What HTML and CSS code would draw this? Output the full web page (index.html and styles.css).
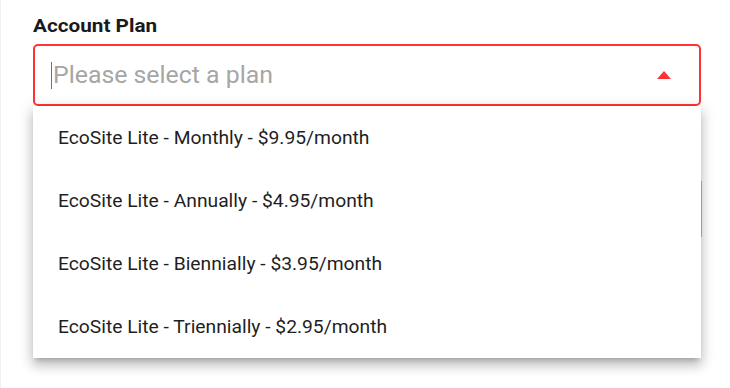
FILE: index.html
```html
<!DOCTYPE html>
<html>
<head>
<meta charset="utf-8">
<link rel="stylesheet" href="styles.css">
</head>
<body>
<div class="page">
  <div class="field">
    <label class="label"><span class="wide">Account Plan</span></label>
    <div class="select">
      <span class="caret"></span>
      <span class="placeholder"><span class="wide">Please select a plan</span></span>
      <span class="arrow"></span>
    </div>
    <ul class="menu">
      <li class="item"><span class="wide">EcoSite Lite - Monthly - $9.95/month</span></li>
      <li class="item"><span class="wide">EcoSite Lite - Annually - $4.95/month</span></li>
      <li class="item"><span class="wide">EcoSite Lite - Biennially - $3.95/month</span></li>
      <li class="item"><span class="wide">EcoSite Lite - Triennially - $2.95/month</span></li>
      <span class="scrollbar"></span>
    </ul>
  </div>
</div>
</body>
</html>
```
FILE: styles.css
```css
html, body {
  margin: 0;
  padding: 0;
  background: #fff;
}
body {
  font-family: Roboto, "Liberation Sans", sans-serif;
  width: 730px;
  height: 388px;
  overflow: hidden;
  border-left: 1px solid #f0f0f0;
  box-sizing: border-box;
}
.page {
  padding: 15px 29px 0 32px;
}
.field {
  position: relative;
}
.wide {
  display: inline-block;
  transform-origin: left center;
  white-space: nowrap;
}
.label {
  display: block;
  font-size: 19px;
  font-weight: 700;
  color: #1a1a1a;
  line-height: 22px;
  margin-bottom: 7px;
}
.label .wide {
  transform: scaleX(1.09);
}
.select {
  display: flex;
  align-items: center;
  height: 62px;
  box-sizing: border-box;
  border: 2px solid #ff3333;
  border-radius: 5px;
  padding: 0 28px 0 16px;
}
.caret {
  width: 1px;
  height: 27px;
  background: #ff3333;
  margin-right: 1px;
}
.placeholder {
  flex: 1;
  font-size: 23px;
  color: #a6a6a6;
  margin-top: 1px;
}
.placeholder .wide {
  transform: scaleX(1.08);
}
.arrow {
  width: 0;
  height: 0;
  border-left: 7.5px solid transparent;
  border-right: 7.5px solid transparent;
  border-bottom: 8px solid #ff3333;
}
.menu {
  position: relative;
  list-style: none;
  margin: 0;
  padding: 0;
  background: #fff;
  box-shadow: 0 5px 5px -3px rgba(0,0,0,.2), 0 8px 10px 1px rgba(0,0,0,.14), 0 3px 14px 2px rgba(0,0,0,.12);
}
.item {
  height: 63px;
  display: flex;
  align-items: center;
  padding-left: 25px;
  font-size: 18px;
  font-weight: 400;
  color: #1f1f1f;
}
.item .wide {
  transform: scaleX(1.07);
}
.scrollbar {
  position: absolute;
  right: -1px;
  top: 75px;
  width: 1px;
  height: 56px;
  background: #9e9e9e;
}
```
